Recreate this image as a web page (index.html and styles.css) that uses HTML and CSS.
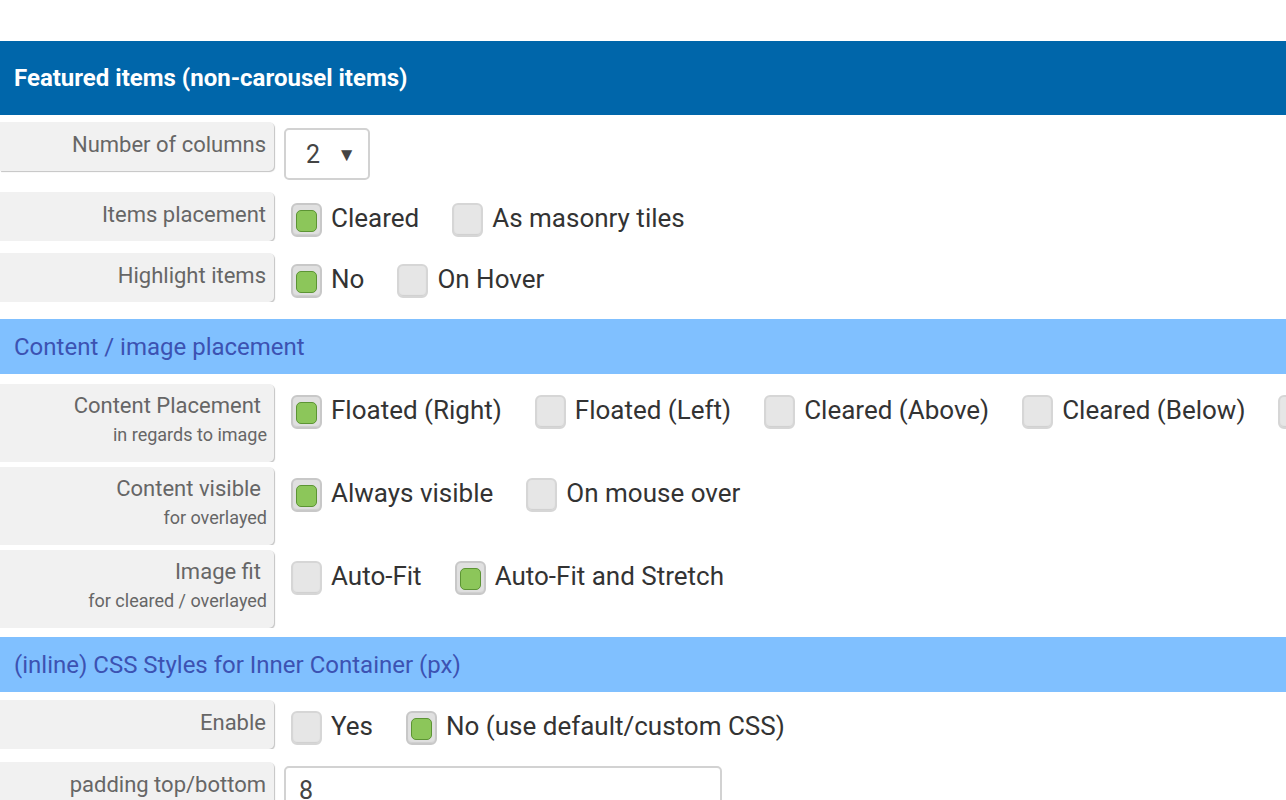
FILE: index.html
```html
<!DOCTYPE html>
<html>
<head>
<meta name="viewport" content="width=device-width, initial-scale=1">
<link rel="stylesheet" href="styles.css">
</head>
<body>

<div class="page">
  <div class="mainHeader">Featured items (non-carousel items)</div>

  <div class="section first">
    <div class="row">
      <div class="label">Number of columns</div>
      <div class="select"><span>2</span><span class="arrow">&#9660;</span></div>
    </div>
    <div class="row">
      <div class="label">Items placement</div>
      <div class="options">
        <label class="opt"><span class="box checked"></span>Cleared</label>
        <label class="opt"><span class="box"></span>As masonry tiles</label>
      </div>
    </div>
    <div class="row last">
      <div class="label">Highlight items</div>
      <div class="options">
        <label class="opt"><span class="box checked"></span>No</label>
        <label class="opt"><span class="box"></span>On Hover</label>
      </div>
    </div>
  </div>

  <div class="subHeader">Content / image placement</div>

  <div class="section second">
    <div class="row tall">
      <div class="label">Content Placement<small>in regards to image</small></div>
      <div class="options">
        <label class="opt"><span class="box checked"></span>Floated (Right)</label>
        <label class="opt"><span class="box"></span>Floated (Left)</label>
        <label class="opt"><span class="box"></span>Cleared (Above)</label>
        <label class="opt"><span class="box"></span>Cleared (Below)</label>
        <label class="opt"><span class="box"></span>Overlayed</label>
      </div>
    </div>
    <div class="row tall">
      <div class="label">Content visible<small>for overlayed</small></div>
      <div class="options">
        <label class="opt"><span class="box checked"></span>Always visible</label>
        <label class="opt"><span class="box"></span>On mouse over</label>
      </div>
    </div>
    <div class="row tall">
      <div class="label">Image fit<small>for cleared / overlayed</small></div>
      <div class="options">
        <label class="opt"><span class="box"></span>Auto-Fit</label>
        <label class="opt"><span class="box checked"></span>Auto-Fit and Stretch</label>
      </div>
    </div>
  </div>

  <div class="subHeader">(inline) CSS Styles for Inner Container (px)</div>

  <div class="section third">
    <div class="row">
      <div class="label">Enable</div>
      <div class="options">
        <label class="opt"><span class="box"></span>Yes</label>
        <label class="opt"><span class="box checked"></span>No (use default/custom CSS)</label>
      </div>
    </div>
    <div class="row">
      <div class="label">padding top/bottom</div>
      <div class="input">8</div>
    </div>
  </div>
</div>

</body>
</html>
```

FILE: styles.css
```css
* {
  box-sizing: border-box;
}

body {
  margin: 0;
  font-family: Roboto, "Liberation Sans", sans-serif;
  background: #fff;
  overflow: hidden;
}

.page {
  padding-top: 41px;
}

/* Headers */
.mainHeader {
  height: 74px;
  display: flex;
  align-items: center;
  padding-left: 14px;
  background: #0066aa;
  color: #fff;
  font-size: 24px;
  font-weight: bold;
}

.subHeader {
  height: 55px;
  display: flex;
  align-items: center;
  padding-left: 14px;
  background: #80c0ff;
  color: #3c52b2;
  font-size: 24px;
}

/* Sections and rows */
.section {
  display: flex;
  flex-direction: column;
}

.section.first {
  padding: 7px 0 17px;
  gap: 12px;
}

.section.second {
  padding: 10px 0 9px;
  gap: 5px;
}

.section.third {
  padding: 8px 0 0;
  gap: 13px;
}

.row {
  display: flex;
  align-items: flex-start;
  gap: 10px;
  white-space: nowrap;
  overflow: hidden;
}

.label {
  width: 274px;
  height: 49px;
  flex-shrink: 0;
  padding: 10px 8px 0 0;
  background: #f1f1f1;
  border-radius: 0 5px 5px 0;
  box-shadow: 1px 1px 1px #c4c4c4;
  text-align: right;
  color: #666;
  font-size: 22px;
  line-height: 26px;
}

.row.tall .label {
  height: 78px;
  padding: 9px 13px 0 0;
}

.label small {
  display: block;
  font-size: 18px;
  line-height: 31px;
  margin-right: -6px;
}

/* Select and input */
.select {
  width: 86px;
  height: 52px;
  margin-top: 6px;
  display: flex;
  align-items: center;
  justify-content: space-between;
  padding: 0 12px 0 20px;
  border: 2px solid #d2d2d2;
  border-radius: 5px;
  color: #444;
  font-size: 25px;
}

.select .arrow {
  font-size: 19px;
  color: #444;
}

.input {
  width: 438px;
  height: 50px;
  margin-top: 4px;
  padding: 8px 0 0 13px;
  border: 2px solid #d2d2d2;
  border-radius: 5px;
  color: #444;
  font-size: 25px;
}

/* Radio-like options */
.options {
  display: flex;
  padding-top: 11px;
}

.opt {
  display: flex;
  align-items: flex-start;
  gap: 9px;
  padding: 0 26px 0 0;
  margin-left: 7px;
  color: #333;
  font-size: 26px;
  line-height: 30px;
}

.box {
  width: 31px;
  height: 34px;
  flex-shrink: 0;
  display: flex;
  align-items: center;
  justify-content: center;
  padding-top: 2px;
  background: #e6e6e6;
  border: 2px solid #d6d6d6;
  border-radius: 6px;
  box-shadow: inset 0 -1px 1px #cfcfcf;
}

.box.checked {
  background: #e0e0e0;
  border-color: #c8c8c8;
}

.box.checked::after {
  content: "";
  width: 19px;
  height: 20px;
  background: #8cc65a;
  border: 1px solid #5c9434;
  border-radius: 5px;
}
```
